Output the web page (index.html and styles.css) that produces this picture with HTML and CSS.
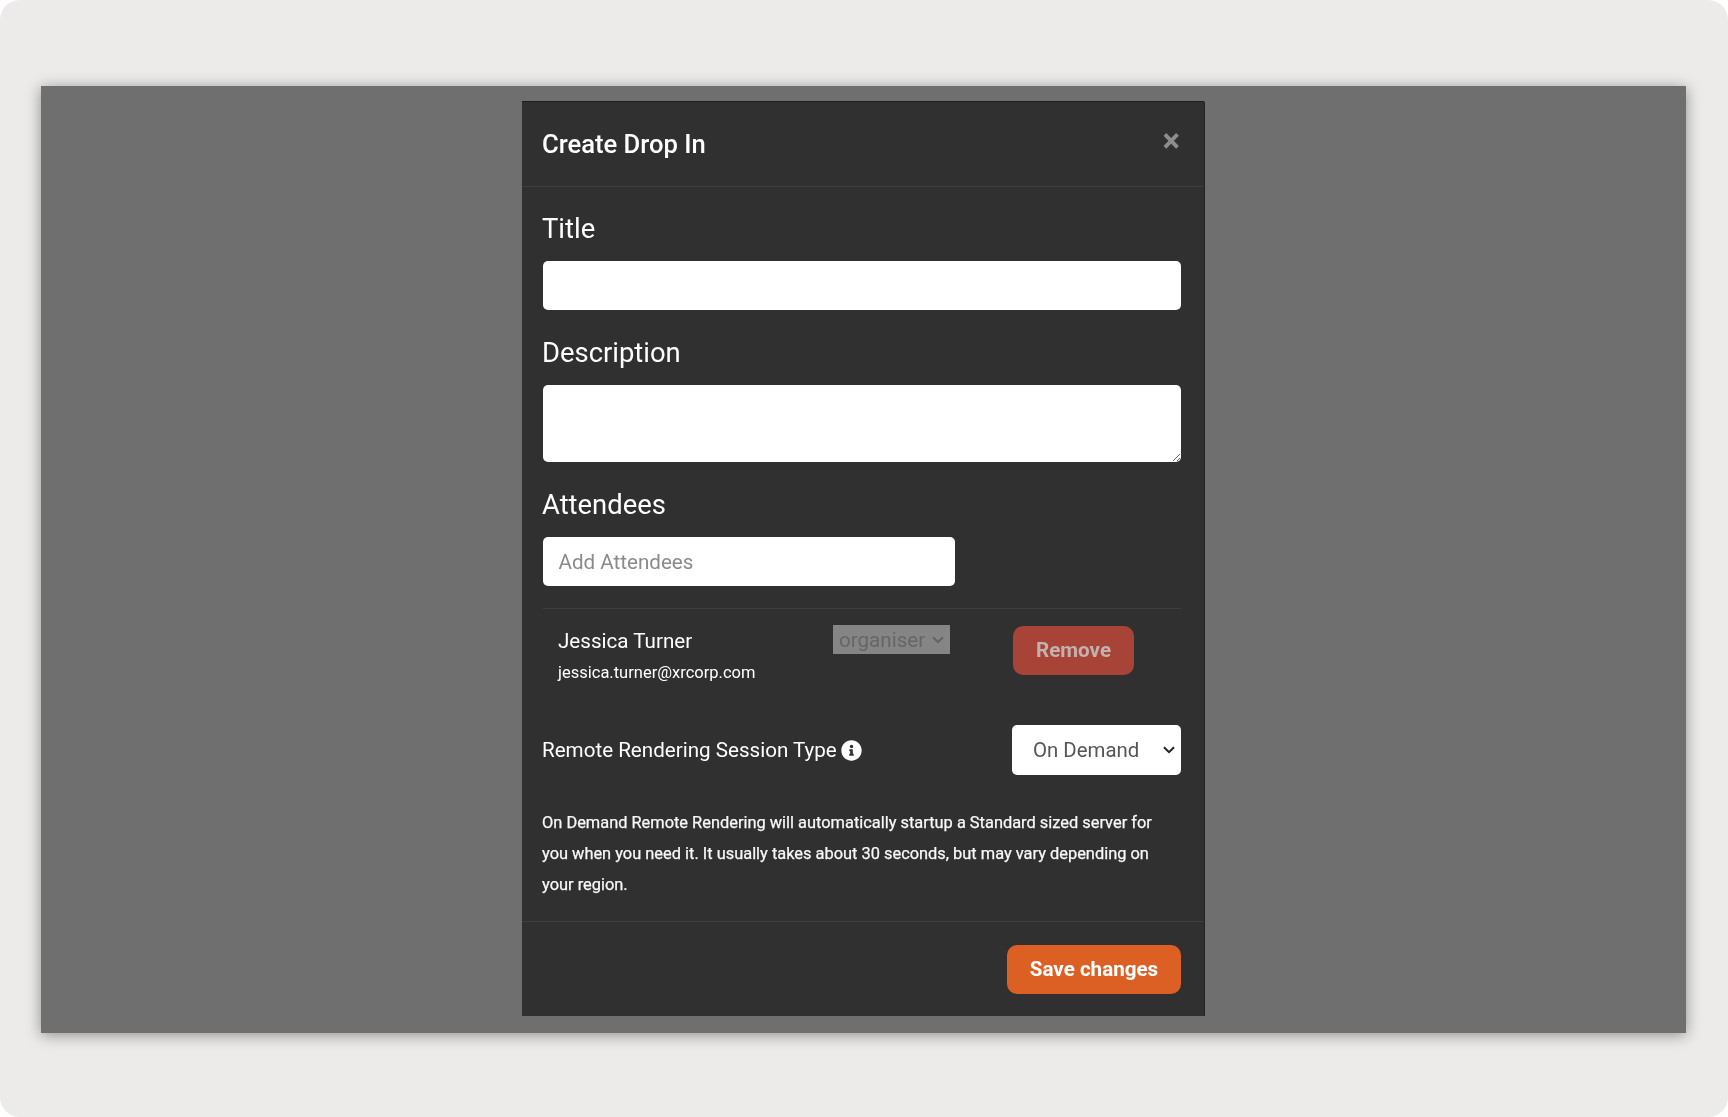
FILE: index.html
```html
<!DOCTYPE html>
<html lang="en">
<head>
<meta charset="utf-8">
<title>Create Drop In</title>
<link rel="stylesheet" href="styles.css">
</head>
<body>
<div class="frame">
  <div class="backdrop">
    <div class="modal">
      <header class="modal-header">
        <h2 class="modal-title">Create Drop In</h2>
        <button class="close" type="button" aria-label="Close">×</button>
      </header>
      <div class="modal-body">
        <div class="group">
          <label class="label" for="title">Title</label>
          <input class="field" id="title" type="text">
        </div>
        <div class="group">
          <label class="label" for="desc">Description</label>
          <textarea class="field area" id="desc"></textarea>
        </div>
        <div class="group attendees">
          <label class="label" for="add">Attendees</label>
          <input class="field add" id="add" type="text" placeholder="Add Attendees">
        </div>
        <div class="attendee">
          <div class="who">
            <div class="name">Jessica Turner</div>
            <div class="email">jessica.turner@xrcorp.com</div>
          </div>
          <select class="role" disabled><option>organiser</option></select>
          <button class="btn remove" type="button">Remove</button>
        </div>
        <div class="session">
          <div class="session-label">
            <span>Remote Rendering Session Type</span>
            <svg class="info" viewBox="0 0 512 512" aria-hidden="true"><path fill="#fff" d="M256 8C119.043 8 8 119.083 8 256c0 137 111.043 248 248 248s248-111 248-248C504 119.083 392.957 8 256 8zm0 110c23.196 0 42 18.804 42 42s-18.804 42-42 42-42-18.804-42-42 18.804-42 42-42zm56 254c0 6.627-5.373 12-12 12h-88c-6.627 0-12-5.373-12-12v-24c0-6.627 5.373-12 12-12h12v-64h-12c-6.627 0-12-5.373-12-12v-24c0-6.627 5.373-12 12-12h64c6.627 0 12 5.373 12 12v100h12c6.627 0 12 5.373 12 12v24z"/></svg>
          </div>
          <select class="type"><option>On Demand</option></select>
        </div>
        <p class="note">On Demand Remote Rendering will automatically startup a Standard sized server for you when you need it. It usually takes about 30 seconds, but may vary depending on your region.</p>
      </div>
      <footer class="modal-footer">
        <button class="btn save" type="button">Save changes</button>
      </footer>
    </div>
  </div>
</div>
</body>
</html>
```
FILE: styles.css
```css
* { box-sizing: border-box; }
html, body { margin: 0; padding: 0; background: #fff; }
body { font-family: Roboto, "Liberation Sans", sans-serif; }
.frame {
  width: 1728px;
  height: 1117px;
  background: #ecebe9;
  border-radius: 20px;
  padding: 86px 42px 84px 41px;
  overflow: hidden;
}
.backdrop {
  height: 947px;
  background: #6f6f6f;
  box-shadow: 0 2px 14px rgba(0, 0, 0, 0.4);
  padding-top: 15px;
}
.modal {
  width: 683px;
  height: 915px;
  margin: 0 auto;
  background: #303030;
  color: #fff;
  border-top: 1px solid #1f1f1f;
  border-right: 1px solid #222;
  border-radius: 0 2px 0 0;
  filter: blur(0.35px);
}
.modal-header {
  height: 85px;
  padding: 0 24px 0 20px;
  display: flex;
  justify-content: space-between;
  align-items: center;
  border-bottom: 1px solid #3f3f3f;
}
.modal-title { margin: 0; font-size: 25.6px; font-weight: 500; line-height: 30px; }
.close {
  border: 0;
  padding: 0;
  margin: -8px 0 0;
  background: none;
  color: #8d8d8d;
  font: 700 33px/1 Roboto, sans-serif;
}
.modal-body { padding: 27px 23px 21px 20px; }
.group { margin-bottom: 28px; }
.group.attendees { margin-bottom: 22px; }
.label { display: block; font-size: 27.4px; line-height: 31px; margin-bottom: 16px; }
.field {
  display: block;
  width: 638px;
  height: 49px;
  margin-left: 1px;
  border: 0;
  border-radius: 5px;
  background: #fff;
  padding: 0 15.5px;
  font: 400 20.6px Roboto, sans-serif;
  color: #555;
}
.field::placeholder { color: #8a8a8a; opacity: 1; }
.area { height: 77px; }
.add { width: 412px; }
.attendee {
  display: flex;
  align-items: flex-start;
  border-top: 1px solid #3f3f3f;
  padding: 16px 0 0 15px;
  margin-left: 1px;
  height: 117px;
}
.who { width: 275px; padding-top: 1px; }
.name { font-size: 20.6px; line-height: 30px; }
.email { font-size: 16.5px; line-height: 30px; margin-top: 2px; }
.role {
  appearance: none;
  width: 117px;
  height: 29px;
  margin: 0;
  border: 0;
  border-radius: 0;
  background: #858585 url("data:image/svg+xml,%3Csvg xmlns='http://www.w3.org/2000/svg' width='12' height='8'%3E%3Cpath d='M1 1.2l5 5 5-5' fill='none' stroke='%23636363' stroke-width='2'/%3E%3C/svg%3E") no-repeat right 6px center;
  color: #666;
  opacity: 1;
  font: 400 20.6px Roboto, sans-serif;
  padding: 0 0 0 6px;
}
.btn {
  height: 49px;
  border: 0;
  border-radius: 10px;
  font: 700 20.6px Roboto, sans-serif;
  padding: 0 0 2px;
}
.remove { width: 121px; margin: 1px 0 0 63px; background: #a84337; color: #c3b1ae; }
.session { display: flex; justify-content: space-between; align-items: center; height: 50px; }
.session-label { display: flex; align-items: center; gap: 4px; font-size: 20.6px; }
.info { width: 21px; height: 21px; }
.type {
  appearance: none;
  width: 169px;
  height: 50px;
  margin: 0;
  border: 0;
  border-radius: 5px;
  background: #fff url("data:image/svg+xml,%3Csvg xmlns='http://www.w3.org/2000/svg' width='12' height='8'%3E%3Cpath d='M1 1.2l5 5 5-5' fill='none' stroke='%23222' stroke-width='2'/%3E%3C/svg%3E") no-repeat right 6px center;
  color: #555;
  font: 400 20.4px Roboto, sans-serif;
  padding: 0 0 0 21px;
}
.note {
  margin: 33px 0 0;
  font-size: 16.4px;
  line-height: 30.8px;
  color: #f8f8f8;
  -webkit-text-stroke: 0.25px #f8f8f8;
}
.modal-footer {
  border-top: 1px solid #3f3f3f;
  padding: 23px 23px 20px 20px;
  display: flex;
  justify-content: flex-end;
}
.save { width: 174px; background: #dc5f24; color: #fff; }
```
